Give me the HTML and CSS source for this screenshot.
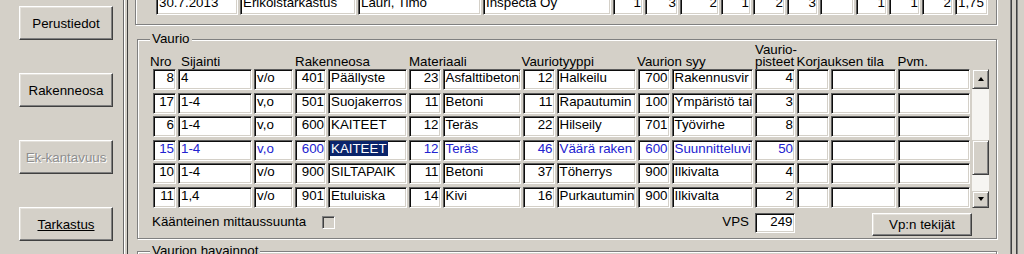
FILE: index.html
```html
<!DOCTYPE html>
<html lang="fi">
<head>
<meta charset="utf-8">
<title>Vaurio</title>
<link rel="stylesheet" href="styles.css">
</head>
<body>
<div class="app">
  <aside class="sidebar">
    <button class="btn side">Perustiedot</button>
    <button class="btn side">Rakenneosa</button>
    <button class="btn side disabled">Ek-kantavuus</button>
    <button class="btn side"><u>Tarkastus</u></button>
  </aside>
  <div class="sep"></div>
  <main class="main">
    <div class="group top-group">
      <div class="top-row">
        <div class="f">30.7.2013</div><div class="f">Erikoistarkastus</div><div class="f">Lauri, Timo</div><div class="f">Inspecta Oy</div><div class="f n">1</div><div class="f n">3</div><div class="f n">2</div><div class="f n">1</div><div class="f n">2</div><div class="f n">3</div><div class="f n"></div><div class="f n">1</div><div class="f n">1</div><div class="f n">2</div><div class="f">1,75</div>
      </div>
    </div>

    <div class="group vaurio">
      <span class="legend">Vaurio</span>
      <div class="head">
        <span class="h h-nro">Nro</span><span class="h h-sij">Sijainti</span><span class="h h-rak">Rakenneosa</span><span class="h h-mat">Materiaali</span><span class="h h-vt">Vauriotyyppi</span><span class="h h-vs">Vaurion syy</span><span class="h h-pis"><span class="l1">Vaurio-</span><span class="l2">pisteet</span></span><span class="h h-kor">Korjauksen tila</span><span class="h">Pvm.</span>
      </div>
      <div class="grid">
        <div class="sb">
          <div class="sb-btn up"><span class="arr-up"></span></div>
          <div class="track-a"></div>
          <div class="sb-btn thumb"></div>
          <div class="track-b"></div>
          <div class="sb-btn down"><span class="arr-down"></span></div>
        </div>

        <div class="f n">8</div><div class="f">4</div><div class="f">v/o</div><div class="f n">401</div><div class="f">Päällyste</div><div class="f n">23</div><div class="f">Asfalttibetoni</div><div class="f n">12</div><div class="f">Halkeilu</div><div class="f n">700</div><div class="f">Rakennusvir</div><div class="f n">4</div><div class="f"></div><div class="f"></div><div class="f"></div>

        <div class="f n">17</div><div class="f">1-4</div><div class="f">v,o</div><div class="f n">501</div><div class="f">Suojakerros</div><div class="f n">11</div><div class="f">Betoni</div><div class="f n">11</div><div class="f">Rapautumin</div><div class="f n">100</div><div class="f">Ympäristö tai</div><div class="f n">3</div><div class="f"></div><div class="f"></div><div class="f"></div>

        <div class="f n">6</div><div class="f">1-4</div><div class="f">v,o</div><div class="f n">600</div><div class="f">KAITEET</div><div class="f n">12</div><div class="f">Teräs</div><div class="f n">22</div><div class="f">Hilseily</div><div class="f n">701</div><div class="f">Työvirhe</div><div class="f n">8</div><div class="f"></div><div class="f"></div><div class="f"></div>

        <div class="f n b">15</div><div class="f b">1-4</div><div class="f b">v,o</div><div class="f n b">600</div><div class="f b"><span class="sel">KAITEET</span></div><div class="f n b">12</div><div class="f b">Teräs</div><div class="f n b">46</div><div class="f b">Väärä raken</div><div class="f n b">600</div><div class="f b">Suunnitteluvi</div><div class="f n b">50</div><div class="f"></div><div class="f"></div><div class="f"></div>

        <div class="f n">10</div><div class="f">1-4</div><div class="f">v/o</div><div class="f n">900</div><div class="f">SILTAPAIK</div><div class="f n">11</div><div class="f">Betoni</div><div class="f n">37</div><div class="f">Töherrys</div><div class="f n">900</div><div class="f">Ilkivalta</div><div class="f n">4</div><div class="f"></div><div class="f"></div><div class="f"></div>

        <div class="f n">11</div><div class="f">1,4</div><div class="f">v/o</div><div class="f n">901</div><div class="f">Etuluiska</div><div class="f n">14</div><div class="f">Kivi</div><div class="f n">16</div><div class="f">Purkautumin</div><div class="f n">900</div><div class="f">Ilkivalta</div><div class="f n">2</div><div class="f"></div><div class="f"></div><div class="f"></div>
      </div>
      <div class="foot">
        <span class="lbl chk-lbl">Käänteinen mittaussuunta</span>
        <span class="cb"></span>
        <span class="lbl vps-lbl">VPS</span>
        <div class="f n vps">249</div>
        <button class="btn tekijat">Vp:n tekijät</button>
      </div>
    </div>

    <div class="group havainnot">
      <span class="legend">Vaurion havainnot</span>
    </div>
  </main>
  <div class="edge"></div>
</div>
</body>
</html>
```

FILE: styles.css
```css
* { box-sizing: border-box; }

html, body {
  margin: 0;
  padding: 0;
}

body {
  width: 1024px;
  height: 254px;
  overflow: hidden;
  background: #d4d0c8;
  font-family: "Liberation Sans", Arial, sans-serif;
  font-size: 13.33px;
  color: #000;
}

.app {
  display: flex;
  height: 254px;
}

/* ---------- left button column ---------- */
.sidebar {
  width: 123px;
  flex: none;
  display: flex;
  flex-direction: column;
  gap: 33px;
  padding: 6px 0 0 19px;
}

.btn {
  font: inherit;
  color: #000;
  background: #d4d0c8;
  border: 1px solid;
  border-color: #fff #404040 #404040 #fff;
  box-shadow: inset -1px -1px #808080, inset 1px 1px #e4e1db;
  padding: 0;
  cursor: default;
}

.side {
  width: 94px;
  height: 34px;
}

.disabled {
  color: #8e8e8e;
  text-shadow: 1px 1px #fff;
}

.sep {
  width: 5px;
  flex: none;
  border-left: 1px solid #6a6a6a;
  border-right: 1px solid #404040;
  box-shadow: inset 1px 0 #fff;
}

.edge {
  width: 8px;
  flex: none;
  border-left: 1px solid #808080;
  border-right: 1px solid #808080;
  box-shadow: inset 1px 0 #404040, inset -1px 0 #404040;
}

/* ---------- main area ---------- */
.main {
  width: 882px;
  flex: none;
  padding-left: 7px;
}

.group {
  position: relative;
  border: 1px solid #808080;
  box-shadow: inset 1px 1px #fff, 1px 1px #fff;
}

.legend {
  position: absolute;
  top: -8px;
  left: 12px;
  padding: 0 2px;
  line-height: 14px;
  background: #d4d0c8;
  white-space: nowrap;
}

.top-group {
  margin-top: -10px;
  width: 862px;
  height: 35px;
  padding: 3px 0 0 20px;
}

.top-row {
  display: grid;
  grid-template-columns: 84px 118px 125px 130px 32px 35px 41px 32px 34px 33px 36px 33px 33px 33px 35px;
  height: 21px;
}

/* sunken edit field */
.f {
  height: 21px;
  margin-right: 2px;
  background: #fff;
  border: 1px solid;
  border-color: #5c5c5c #fff #fff #5c5c5c;
  box-shadow: inset 1px 1px #0c0c0c, inset -1px -1px #d4d0c8;
  line-height: 15px;
  padding: 0 1px 0 2px;
  white-space: nowrap;
  overflow: hidden;
}

.n { text-align: right; }

.b { color: #2222d0; }

.sel {
  background: #0a246a;
  color: #fff;
  margin-left: -1px;
  padding: 0 1px;
}

.vaurio {
  margin: 14px 0 0 2px;
  width: 860px;
  height: 200px;
}

.head {
  display: flex;
  align-items: flex-end;
  height: 28px;
  padding-left: 12px;
  line-height: 12px;
  white-space: nowrap;
}

.h { flex: none; }
.h-nro { width: 31px; }
.h-sij { width: 114px; }
.h-rak { width: 114px; }
.h-mat { width: 112.5px; }
.h-vt { width: 115.5px; }
.h-vs { width: 118px; }
.h-pis {
  width: 41.5px;
  display: flex;
  flex-direction: column;
}
.l1, .l2 {
  display: block;
  height: 12px;
  line-height: 12px;
}
.h-kor { width: 101px; }

.grid {
  margin: 1.3px 0 0 15px;
  display: grid;
  grid-template-columns: 25px 76px 41px 33px 81px 33.5px 80.5px 33.5px 81.5px 33.5px 83.5px 42px 33.5px 67px 74.5px 17px;
  grid-template-rows: repeat(6, 21px);
  row-gap: 2.5px;
}

/* scrollbar */
.sb {
  grid-column: 16;
  grid-row: 1 / 7;
  display: flex;
  flex-direction: column;
  background: #f6f5f2;
}

.sb-btn {
  flex: none;
  background: #d4d0c8;
  border: 1px solid;
  border-color: #d4d0c8 #404040 #404040 #d4d0c8;
  box-shadow: inset 1px 1px #fff, inset -1px -1px #808080;
  display: flex;
  align-items: center;
  justify-content: center;
}

.up { height: 20px; }
.down { height: 17px; }
.thumb { height: 35px; }
.track-a { flex: none; height: 50.7px; }
.track-b { flex: 1; }

.arr-up, .arr-down {
  width: 0;
  height: 0;
  border-left: 3.5px solid transparent;
  border-right: 3.5px solid transparent;
}
.arr-up { border-bottom: 4px solid #000; }
.arr-down { border-top: 4px solid #000; }

/* footer line */
.foot {
  display: flex;
  align-items: flex-start;
  margin-top: 5.2px;
  padding-left: 14px;
  height: 23px;
}

.lbl {
  flex: none;
  line-height: 18px;
  white-space: nowrap;
}

.chk-lbl { width: 170px; }

.cb {
  flex: none;
  width: 13px;
  height: 13px;
  margin-top: 3px;
  background: #d4d0c8;
  border: 1px solid;
  border-color: #808080 #fff #fff #808080;
  box-shadow: inset 1px 1px #404040, inset -1px -1px #d4d0c8;
}

.vps-lbl {
  width: 414px;
  text-align: right;
}

.vps {
  flex: none;
  width: 39.5px;
  height: 20.5px;
  margin: 0 0 0 6px;
}

.tekijat {
  flex: none;
  width: 100px;
  height: 23px;
  margin-left: 77.5px;
}

.havainnot {
  margin: 12px 0 0 2px;
  width: 860px;
  height: 40px;
}
```
